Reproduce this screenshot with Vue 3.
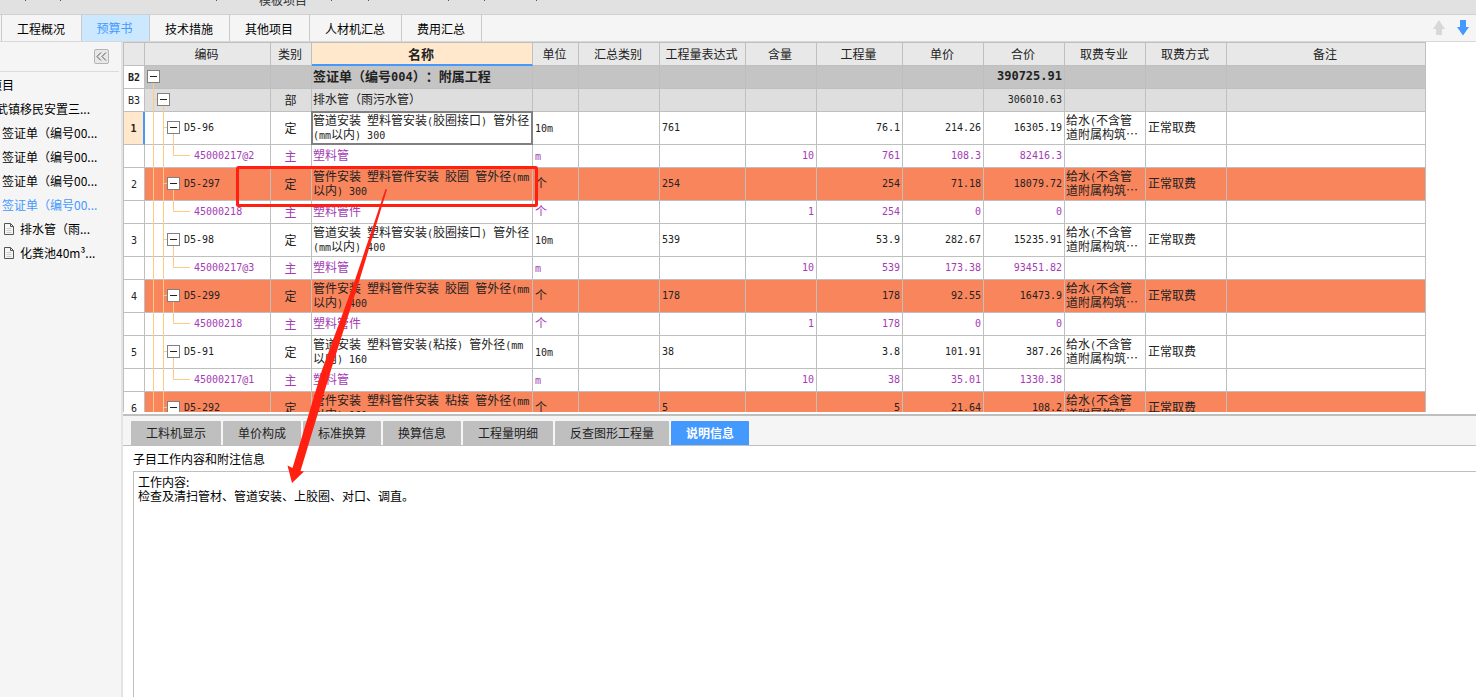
<script setup>
const tabs = ['工程概况', '预算书', '技术措施', '其他项目', '人材机汇总', '费用汇总']
const detailTabs = ['工料机显示', '单价构成', '标准换算', '换算信息', '工程量明细', '反查图形工程量', '说明信息']

const tree = [
  { text: '目项目', kind: 'root' },
  { text: '武镇移民安置三...', kind: 'branch' },
  { text: '签证单（编号00...', kind: 'sheet' },
  { text: '签证单（编号00...', kind: 'sheet' },
  { text: '签证单（编号00...', kind: 'sheet' },
  { text: '签证单（编号00...', kind: 'sheet', active: true },
  { text: '排水管（雨...', kind: 'leaf' },
  { text: '化粪池40m³...', kind: 'leaf' },
]

const columns = [
  { key: 'no', label: '' },
  { key: 'code', label: '编码' },
  { key: 'type', label: '类别' },
  { key: 'name', label: '名称' },
  { key: 'unit', label: '单位' },
  { key: 'group', label: '汇总类别' },
  { key: 'expr', label: '工程量表达式' },
  { key: 'content', label: '含量' },
  { key: 'qty', label: '工程量' },
  { key: 'price', label: '单价' },
  { key: 'total', label: '合价' },
  { key: 'major', label: '取费专业' },
  { key: 'mode', label: '取费方式' },
  { key: 'remark', label: '备注' },
]

const item = (no, code, name, unit, expr, qty, price, total, hot) => ({
  no, code, type: '定', name, unit, expr, qty, price, total,
  major: '给水(不含管\n道附属构筑…', mode: '正常取费', level: 3, kind: hot ? 'item hot' : 'item',
})
const material = (code, name, unit, content, qty, price, total) => ({
  no: '', code, type: '主', name, unit, content, qty, price, total, level: 4, kind: 'material',
})

const rows = [
  { no: 'B2', code: '', name: '签证单（编号004）：附属工程', total: '390725.91', level: 1, kind: 'part' },
  { no: 'B3', code: '', type: '部', name: '排水管（雨污水管）', total: '306010.63', level: 2, kind: 'section' },
  item('1', 'D5-96', '管道安装 塑料管安装(胶圈接口) 管外径\n(mm以内) 300', '10m', '761', '76.1', '214.26', '16305.19'),
  material('45000217@2', '塑料管', 'm', '10', '761', '108.3', '82416.3'),
  item('2', 'D5-297', '管件安装 塑料管件安装 胶圈 管外径(mm\n以内) 300', '个', '254', '254', '71.18', '18079.72', true),
  material('45000218', '塑料管件', '个', '1', '254', '0', '0'),
  item('3', 'D5-98', '管道安装 塑料管安装(胶圈接口) 管外径\n(mm以内) 400', '10m', '539', '53.9', '282.67', '15235.91'),
  material('45000217@3', '塑料管', 'm', '10', '539', '173.38', '93451.82'),
  item('4', 'D5-299', '管件安装 塑料管件安装 胶圈 管外径(mm\n以内) 400', '个', '178', '178', '92.55', '16473.9', true),
  material('45000218', '塑料管件', '个', '1', '178', '0', '0'),
  item('5', 'D5-91', '管道安装 塑料管安装(粘接) 管外径(mm\n以内) 160', '10m', '38', '3.8', '101.91', '387.26'),
  material('45000217@1', '塑料管', 'm', '10', '38', '35.01', '1330.38'),
  item('6', 'D5-292', '管件安装 塑料管件安装 粘接 管外径(mm\n以内) 160', '个', '5', '5', '21.64', '108.2', true),
]

// Connector lines of the code column, by depth
const guides = {
  1: 'M8.5 17V23',
  2: 'M8.5 0V23M8.5 10.5H12M18.5 17V23',
  3: 'M8.5 0V33M18.5 0V33M18.5 15.5H22M28.5 22V33',
  4: 'M8.5 0V23M18.5 0V23M28.5 0V10.5H45',
}

// Splits mixed text so that half-width characters take exactly half a cell
const runs = (text) => (text ?? '').match(/[\x20-\x7e]+|[^\x20-\x7e]+/g) ?? []
const isHalf = (run) => /^[\x20-\x7e]/.test(run)
</script>

<template>
  <div class="app">
    <header class="strip">
      <span>模板项目</span>
      <svg class="ticks" width="560" height="1" viewBox="0 0 560 1" aria-hidden="true">
        <path d="M25 0h1v1h-1zM60 0h1v1h-1zM216 0h1v1h-1zM331 0h1v1h-1zM368 0h1v1h-1zM448 0h1v1h-1zM484 0h1v1h-1zM536 0h1v1h-1z" fill="#555" />
      </svg>
    </header>

    <nav class="tabs">
      <button v-for="(t, i) in tabs" :key="t" type="button" :class="['tab', { active: i === 1 }]">{{ t }}</button>
      <span class="grow"></span>
      <button type="button" class="move" aria-label="上移" disabled>
        <svg width="12" height="16" viewBox="0 0 12 16"><path d="M6 0L12 9H9V15H3V9H0Z" fill="#d8d8d8" /></svg>
      </button>
      <button type="button" class="move" aria-label="下移">
        <svg width="12" height="16" viewBox="0 0 12 16"><path d="M6 15.500L12 7H9V0H3V7H0Z" fill="#4499ff" /></svg>
      </button>
    </nav>

    <div class="body">
      <aside class="side">
        <div class="side-head">
          <button type="button" class="collapse" aria-label="收起">
            <svg width="11" height="9" viewBox="0 0 11 9"><path d="M5 0.500L1 4.500L5 8.500M10 0.500L6 4.500L10 8.500" fill="none" stroke="#555" /></svg>
          </button>
        </div>
        <ul class="tree">
          <li v-for="(n, i) in tree" :key="i" :class="[n.kind, { active: n.active }]">
            <svg v-if="n.kind === 'leaf'" width="11" height="13" viewBox="0 0 11 13">
              <path d="M2.500 5.500H7.500M2.500 7.500H7.500M2.500 9.500H7.500" fill="none" stroke="#ccc" />
              <path d="M0.500 0.500H6.500L9.500 3.500V11.500H0.500ZM6.500 0.500V3.500H9.500" fill="none" stroke="#555" />
            </svg>
            <span>{{ n.text }}</span>
          </li>
        </ul>
      </aside>

      <main class="main">
        <div class="grid-pane">
          <table class="grid">
            <colgroup><col v-for="c in columns" :key="c.key" :class="'w-' + c.key" /></colgroup>
            <thead>
              <tr><th v-for="c in columns" :key="c.key" scope="col" :class="{ current: c.key === 'name' }">{{ c.label }}</th></tr>
            </thead>
            <tbody>
              <tr v-for="(r, i) in rows" :key="i" :class="[r.kind, { selected: r.no === '1' }]">
                <td v-for="c in columns" :key="c.key" :class="'c-' + c.key">
                  <template v-if="c.key === 'code'">
                    <svg class="guide" width="46" :height="r.level === 3 ? 33 : 23"><path :d="guides[r.level]" /></svg>
                    <div :class="['node', 'lv' + r.level]">
                      <button v-if="r.level < 4" type="button" class="fold" aria-label="折叠"><i></i></button>
                      <span class="half">{{ r.code }}</span>
                    </div>
                  </template>
                  <template v-else><span v-for="(s, k) in runs(r[c.key])" :key="k" :class="{ half: isHalf(s) }">{{ s }}</span></template>
                </td>
              </tr>
            </tbody>
          </table>
        </div>

        <nav class="detail-tabs">
          <button v-for="(t, i) in detailTabs" :key="t" type="button" :class="['dtab', { active: i === 6 }]">{{ t }}</button>
        </nav>
        <section class="detail">
          <label for="note">子目工作内容和附注信息</label>
          <textarea id="note" spellcheck="false">工作内容:
检查及清扫管材、管道安装、上胶圈、对口、调直。</textarea>
        </section>
      </main>
    </div>

    <svg class="marks" width="560" height="500" viewBox="0 0 560 500" aria-hidden="true">
      <rect x="237.500" y="167.500" width="299" height="38" rx="1" fill="none" stroke="#ff2012" stroke-width="3" />
      <path d="M385.500 189L387 189.500L359.500 280L331 370L300.500 471L304 471.500L292 483L287.500 465.500L292.500 468L322 370L355 280Z" fill="#ff2012" />
    </svg>
  </div>
</template>

<style>
body {
  margin: 0;
  overflow: hidden;
}
</style>

<style scoped>
.app {
  position: relative;
  display: flex;
  flex-direction: column;
  height: 100vh;
  overflow: hidden;
  background: #fff;
  color: #000;
  font: 12px/14px "Noto Sans CJK SC", sans-serif;
  text-spacing-trim: space-all;
}
button {
  margin: 0;
  padding: 0;
  border: 0;
  background: none;
  color: inherit;
  font: inherit;
}
.strip {
  position: relative;
  flex: none;
  display: flex;
  align-items: flex-end;
  height: 14px;
  padding-left: 259px;
  overflow: hidden;
  background: #e1e1e1;
  color: #333;
}
.strip span {
  padding-bottom: 7px;
}
.ticks {
  position: absolute;
  left: 0;
  top: 0;
}
.tabs {
  flex: none;
  display: flex;
  align-items: stretch;
  height: 28px;
  box-sizing: border-box;
  padding-left: 1px;
  border-top: 1px solid #d0d0d0;
  border-bottom: 1px solid #d8d8d8;
  background: #f5f5f5;
}
.tab {
  padding: 2px 16px 0 15px;
  border-right: 1px solid #c8c8c8;
}
.tab:first-child {
  border-left: 1px solid #c8c8c8;
}
.tab.active {
  width: 68px;
  padding: 0 16px 0 14px;
  background: #cce8ff;
  color: #4499ff;
  white-space: nowrap;
}
.grow {
  flex: 1;
}
.move {
  display: flex;
  align-items: center;
  width: 12px;
  margin-right: 12px;
}
.move:last-child {
  margin-right: 7px;
}
.body {
  flex: 1;
  display: flex;
  min-height: 0;
}
.side {
  flex: none;
  width: 121px;
  background: #f5f5f5;
}
.side-head {
  display: flex;
  justify-content: flex-end;
  align-items: center;
  height: 30px;
  width: 119px;
  padding-right: 10px;
  box-sizing: border-box;
  border-bottom: 1px solid #dcdcdc;
}
.collapse {
  display: flex;
  align-items: center;
  justify-content: center;
  width: 15px;
  height: 15px;
  box-sizing: border-box;
  border: 1px solid #b4b4b4;
  border-radius: 2px;
  background: #e8e8e8;
}
.tree {
  margin: 0;
  padding: 1px 0 0;
  list-style: none;
  overflow: hidden;
}
.tree li {
  display: flex;
  align-items: center;
  height: 24px;
  padding-left: 2px;
  white-space: nowrap;
}
.tree .root {
  margin-left: -24px;
}
.tree .branch {
  margin-left: -6px;
}
.tree .leaf {
  padding-left: 4px;
  gap: 5px;
}
.tree .active {
  color: #4499ff;
}
.main {
  flex: 1;
  display: flex;
  flex-direction: column;
  min-width: 0;
  border-left: 2px solid #e4e4e4;
}
.grid-pane {
  flex: none;
  height: 370px;
  overflow: hidden;
  border-bottom: 2px solid #fff;
}
.grid {
  width: calc(100% - 50px);
  table-layout: fixed;
  border-collapse: separate;
  border-spacing: 0;
  border-top: 1px solid #bfbfbf;
  border-left: 1px solid #bfbfbf;
  color: #222;
}
.w-no { width: 21px; }
.w-code { width: 126px; }
.w-type { width: 41px; }
.w-name { width: 221px; }
.w-unit { width: 46px; }
.w-group { width: 81px; }
.w-expr { width: 86px; }
.w-content { width: 71px; }
.w-qty { width: 86px; }
.w-price { width: 81px; }
.w-total { width: 81px; }
.w-major { width: 81px; }
.w-mode { width: 81px; }
th,
td {
  position: relative;
  box-sizing: border-box;
  height: 23px;
  border-right: 1px solid #bfbfbf;
  border-bottom: 1px solid #bfbfbf;
  white-space: pre;
}
td {
  padding: 0 2px 2px;
}
th {
  padding: 0 2px 0 0;
  background: #e8e8e8;
  font-weight: 400;
}
th.current {
  background: #ffe8cc;
  border-bottom: 2px solid #4499ff;
  font-size: 13px;
  font-weight: 700;
}
.half {
  font-family: "DejaVu Sans Mono", monospace;
  font-size: 10px;
  line-height: 10px;
}
.item td {
  height: 33px;
}
.part td {
  background: #c4c4c4;
  font-size: 13px;
  font-weight: 700;
}
.part .half {
  font-size: 12px;
}
.part .c-no .half {
  font-size: 10px;
}
.section td {
  background: #dedede;
}
.hot td {
  background: #f9855c;
}
.material td {
  color: #a33cb4;
}
tbody .c-no {
  padding: 0 0 2px;
  background: #fff;
  color: #222;
  text-align: center;
}
.c-type {
  padding: 0 1px 1px 0;
  text-align: center;
}
.c-name,
.c-major {
  padding-left: 1px;
}
.c-expr {
  padding: 0 2px 4px;
}
.c-content,
.c-qty,
.c-price,
.c-total {
  padding: 0 2px 4px;
  text-align: right;
}
.c-code {
  padding: 0 0 1px;
}
.item .c-name,
.item .c-major {
  padding-top: 1px;
  padding-bottom: 0;
  vertical-align: top;
}
.selected .c-no {
  background: #ffe8cc;
  border-right: 2px solid #4499ff;
  font-weight: 700;
}
.selected .c-name::after {
  content: "";
  position: absolute;
  inset: -1px;
  border: 2px solid #808080;
}
.guide {
  position: absolute;
  left: 0;
  top: 0;
  fill: none;
  stroke: #ffc988;
}
.node {
  position: relative;
  display: flex;
  align-items: center;
  gap: 4px;
}
.lv1 { padding-left: 2px; }
.lv2 { padding-left: 12px; }
.lv3 { padding-left: 22px; }
.lv4 { padding-left: 49px; }
.fold {
  display: flex;
  align-items: center;
  justify-content: center;
  width: 13px;
  height: 13px;
  box-sizing: border-box;
  border: 1px solid #808080;
  background: #fff;
}
.fold i {
  width: 7px;
  height: 1px;
  background: #222;
}
.detail-tabs {
  flex: none;
  display: flex;
  align-items: stretch;
  gap: 2px;
  height: 32px;
  box-sizing: border-box;
  padding: 5px 0 0 8px;
  border-top: 2px solid #bfbfbf;
  border-bottom: 1px solid #bfbfbf;
  background: #f5f5f5;
}
.dtab {
  padding: 0 15px;
  border-radius: 1px 1px 0 0;
  background: #bfbfbf;
  color: #222;
}
.dtab.active {
  background: #4499ff;
  color: #fff;
  font-weight: 700;
}
.detail {
  flex: 1;
  display: flex;
  flex-direction: column;
  min-height: 0;
  padding-left: 10px;
}
.detail label {
  padding: 6px 0 5px;
}
.detail textarea {
  flex: 1;
  margin: 0;
  padding: 3px 4px;
  border: 1px solid #bfbfbf;
  border-width: 1px 0 0 1px;
  outline: 0;
  resize: none;
  background: #fff;
  color: #000;
  font: inherit;
}
.marks {
  position: absolute;
  left: 0;
  top: 0;
  pointer-events: none;
}
</style>
